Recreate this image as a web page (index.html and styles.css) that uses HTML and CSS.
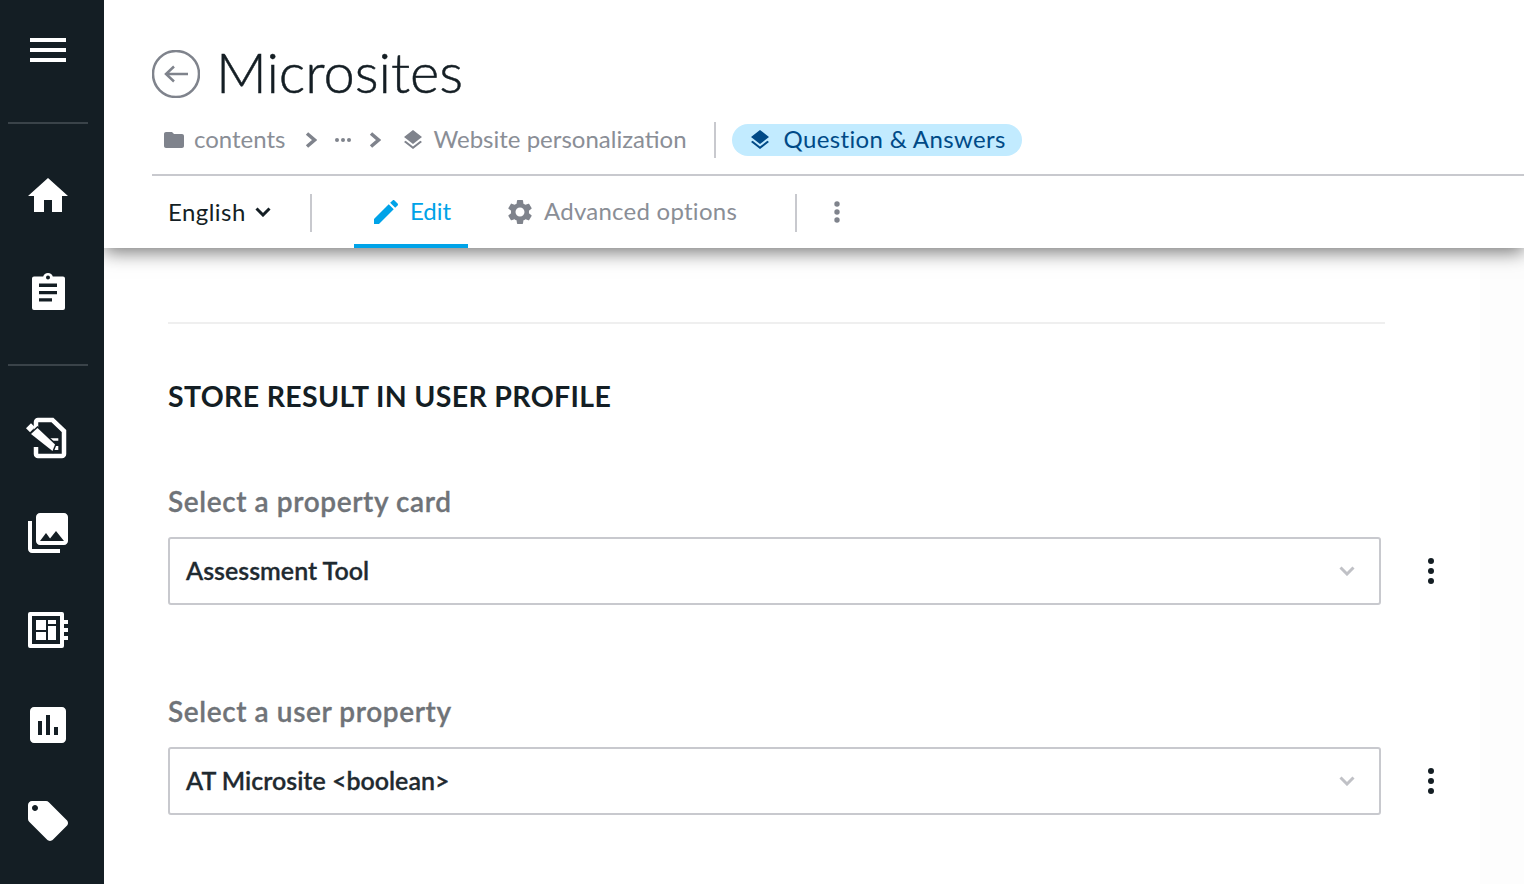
FILE: index.html
```html
<!DOCTYPE html>
<html lang="en">
<head>
    <meta charset="UTF-8">
    <meta name="viewport" content="width=device-width, initial-scale=1.0">
    <title>Microsites</title>
    <link rel="stylesheet" href="styles.css">
</head>
<body>
    <div class="app">
        <!-- Sidebar -->
        <nav class="sidebar">
            <div class="nav-item nav-menu">
                <svg class="nav-icon" viewBox="0 0 24 24"><path d="M3 18h18v-2H3v2zm0-5h18v-2H3v2zm0-7v2h18V6H3z"/></svg>
            </div>
            <div class="nav-divider nav-divider-first"></div>
            <div class="nav-item">
                <svg class="nav-icon" viewBox="0 0 24 24"><path d="M10 20v-6h4v6h5v-8h3L12 3 2 12h3v8z"/></svg>
            </div>
            <div class="nav-item">
                <svg class="nav-icon" viewBox="0 0 48 48"><path fill-rule="evenodd" d="M10 8.500h9.200a5 5 0 0 1 9.600 0H39a2 2 0 0 1 2 2V40a2 2 0 0 1-2 2H10a2 2 0 0 1-2-2V10.500a2 2 0 0 1 2-2zM24 7.500a2 2 0 1 0 0 4 2 2 0 0 0 0-4zM15 15.500V19h18v-3.500zM15 23v3.300h18V23zM15 30.200v3.300h13v-3.300z"/></svg>
            </div>
            <div class="nav-divider"></div>
            <div class="nav-item">
                <svg class="nav-icon" viewBox="0 0 48 48">
                    <path class="doc-line" d="M12 24V9a2 2 0 0 1 2-2h14.500L40 18v23a2 2 0 0 1-2 2H14a2 2 0 0 1-2-2v-7"/>
                    <path d="M26 25.300h8.300v2.500H26zM29.300 33h5v4h-5z"/>
                    <path class="pencil" d="M7 21L13.500 15 31 31.500 28.500 38z"/>
                    <path d="M2 15.300L7 10.300 11 14.300 6 19.300z"/>
                </svg>
            </div>
            <div class="nav-item">
                <svg class="nav-icon" viewBox="0 0 24 24"><path d="M22 16V4c0-1.100-.9-2-2-2H8c-1.100 0-2 .9-2 2v12c0 1.100.9 2 2 2h12c1.100 0 2-.9 2-2zm-11-4l2.030 2.710L16 11l4 5H8l3-4zM2 6v14c0 1.100.9 2 2 2h14v-2H4V6H2z"/></svg>
            </div>
            <div class="nav-item">
                <svg class="nav-icon" viewBox="0 0 48 48"><path fill-rule="evenodd" d="M6 7h32a2 2 0 0 1 2 2v32a2 2 0 0 1-2 2H6a2 2 0 0 1-2-2V9a2 2 0 0 1 2-2zm2 4v28h28V11zM12 15h10v10H12zM12 27h10v8H12zM24 15h8v4h-8zM24 21h8v14h-8zM40 15h4v4h-4zM40 23h4v4h-4zM40 31h4v4h-4z"/></svg>
            </div>
            <div class="nav-item">
                <svg class="nav-icon" viewBox="0 0 24 24"><path d="M19 3H5c-1.100 0-2 .9-2 2v14c0 1.100.9 2 2 2h14c1.100 0 2-.9 2-2V5c0-1.100-.9-2-2-2zM9 17H7v-7h2v7zm4 0h-2V7h2v10zm4 0h-2v-4h2v4z"/></svg>
            </div>
            <div class="nav-item">
                <svg class="nav-icon" viewBox="0 0 24 24"><path d="M21.410 11.580l-9-9C12.050 2.220 11.550 2 11 2H4c-1.100 0-2 .9-2 2v7c0 .55.22 1.050.59 1.420l9 9c.36.36.86.58 1.410.58.55 0 1.050-.22 1.410-.59l7-7c.37-.36.59-.86.59-1.410 0-.55-.23-1.060-.59-1.420zM5.500 7C4.670 7 4 6.330 4 5.500S4.670 4 5.500 4 7 4.670 7 5.500 6.330 7 5.500 7z"/></svg>
            </div>
        </nav>

        <div class="main">
            <!-- Header -->
            <header class="header">
                <div class="title-row">
                    <svg class="back-icon" viewBox="0 0 48 48">
                        <circle cx="24" cy="24" r="23"/>
                        <path d="M36 24H14M22 16.500L14 24l8 7.500"/>
                    </svg>
                    <h1>Microsites</h1>
                </div>

                <div class="crumbs">
                    <svg class="crumb-icon" viewBox="0 0 24 24"><path d="M10 4H4c-1.100 0-1.990.9-1.990 2L2 18c0 1.100.9 2 2 2h16c1.100 0 2-.9 2-2V8c0-1.100-.9-2-2-2h-8l-2-2z"/></svg>
                    <span class="crumb crumb-contents">contents</span>
                    <svg class="crumb-sep" viewBox="0 0 12 16"><path d="M2 1.500L9.500 8 2 14.500"/></svg>
                    <svg class="crumb-dots" viewBox="0 0 16 4"><circle cx="2" cy="2" r="2"/><circle cx="8" cy="2" r="2"/><circle cx="14" cy="2" r="2"/></svg>
                    <svg class="crumb-sep crumb-sep-second" viewBox="0 0 12 16"><path d="M2 1.500L9.500 8 2 14.500"/></svg>
                    <svg class="crumb-icon crumb-layers" viewBox="0 0 24 24"><path d="M11.990 18.540l-7.370-5.730L3 14.070l9 7 9-7-1.630-1.270-7.380 5.740zM12 16l7.360-5.730L21 9l-9-7-9 7 1.630 1.270L12 16z"/></svg>
                    <span class="crumb">Website personalization</span>
                    <div class="crumb-divider"></div>
                    <div class="pill">
                        <svg class="pill-icon" viewBox="0 0 24 24"><path d="M11.990 18.540l-7.370-5.730L3 14.070l9 7 9-7-1.630-1.270-7.380 5.740zM12 16l7.360-5.730L21 9l-9-7-9 7 1.630 1.270L12 16z"/></svg>
                        <span class="pill-text">Question &amp; Answers</span>
                    </div>
                </div>

                <div class="toolbar">
                    <div class="lang">
                        <span class="tool-text lang-text">English</span>
                        <svg class="lang-arrow" viewBox="0 0 16 10"><path d="M1.500 1.500L8 8l6.500-6.500"/></svg>
                    </div>
                    <div class="tool-divider"></div>
                    <div class="tab tab-active">
                        <svg class="tab-pencil" viewBox="0 0 24 24"><path d="M3 17.250V21h3.750L17.810 9.940l-3.750-3.750L3 17.250zM20.710 7.040c.39-.39.39-1.020 0-1.410l-2.340-2.340c-.39-.39-1.020-.39-1.410 0l-1.830 1.830 3.750 3.750 1.830-1.830z"/></svg>
                        <span class="tool-text">Edit</span>
                    </div>
                    <div class="tab tab-options">
                        <svg class="tab-gear" viewBox="0 0 24 24"><path d="M19.140 12.940c.04-.3.06-.61.06-.94 0-.32-.02-.64-.07-.94l2.030-1.580c.18-.14.23-.41.12-.61l-1.920-3.320c-.12-.22-.37-.29-.59-.22l-2.390.96c-.5-.38-1.030-.7-1.620-.94l-.36-2.540c-.04-.24-.24-.41-.48-.41h-3.840c-.24 0-.43.17-.47.41l-.36 2.540c-.59.24-1.130.57-1.620.94l-2.390-.96c-.22-.08-.47 0-.59.22L2.740 8.870c-.12.21-.08.47.12.61l2.030 1.580c-.05.3-.09.63-.09.94s.02.64.07.94l-2.030 1.580c-.18.14-.23.41-.12.61l1.920 3.320c.12.22.37.29.59.22l2.390-.96c.5.38 1.030.7 1.620.94l.36 2.540c.05.24.24.41.48.41h3.840c.24 0 .44-.17.47-.41l.36-2.540c.59-.24 1.130-.56 1.620-.94l2.390.96c.22.08.47 0 .59-.22l1.920-3.320c.12-.22.07-.47-.12-.61l-2.010-1.580zM12 15.600c-1.980 0-3.600-1.620-3.600-3.600s1.620-3.600 3.600-3.600 3.600 1.620 3.600 3.600-1.620 3.600-3.600 3.600z"/></svg>
                        <span class="tool-text options-text">Advanced options</span>
                    </div>
                    <div class="tool-divider"></div>
                    <svg class="tool-kebab" viewBox="0 0 6 22"><circle cx="3" cy="3" r="2.700"/><circle cx="3" cy="11" r="2.700"/><circle cx="3" cy="19" r="2.700"/></svg>
                </div>
            </header>

            <!-- Form -->
            <div class="content">
                <div class="form-col">
                    <div class="rule"></div>
                    <h2>STORE RESULT IN USER PROFILE</h2>

                    <div class="field-label">Select a property card</div>
                    <div class="field-row">
                        <div class="select-box">
                            <span class="select-text">Assessment Tool</span>
                            <svg class="select-arrow" viewBox="0 0 16 10"><path d="M1.500 1.500L8 8l6.500-6.500"/></svg>
                        </div>
                        <svg class="kebab" viewBox="0 0 8 28"><circle cx="4" cy="4" r="3"/><circle cx="4" cy="14" r="3"/><circle cx="4" cy="24" r="3"/></svg>
                    </div>

                    <div class="field-label field-label-second">Select a user property</div>
                    <div class="field-row">
                        <div class="select-box">
                            <span class="select-text">AT Microsite &lt;boolean&gt;</span>
                            <svg class="select-arrow" viewBox="0 0 16 10"><path d="M1.500 1.500L8 8l6.500-6.500"/></svg>
                        </div>
                        <svg class="kebab" viewBox="0 0 8 28"><circle cx="4" cy="4" r="3"/><circle cx="4" cy="14" r="3"/><circle cx="4" cy="24" r="3"/></svg>
                    </div>
                </div>
                <div class="rail"></div>
            </div>
        </div>
    </div>
</body>
</html>
```

FILE: styles.css
```css
/* General */
* {
    box-sizing: border-box;
}

html, body {
    height: 100%;
}

body {
    margin: 0;
    overflow: hidden;
    background-color: #fff;
    color: #141e24;
    font-family: Lato, "Open Sans", sans-serif;
}

.app {
    display: flex;
    height: 884px;
}

/* Sidebar */
.sidebar {
    position: relative;
    z-index: 2;
    flex: 0 0 104px;
    padding: 2px 16px 0 0;
    background-color: #141e24;
}

.nav-item {
    display: flex;
    align-items: center;
    justify-content: center;
    padding-left: 8px;
    height: 96px;
}

.nav-icon {
    width: 48px;
    height: 48px;
    fill: #fff;
}

.nav-divider {
    height: 2px;
    margin: 24px 0 23px 8px;
    background-color: #3a4349;
}

.nav-divider-first {
    margin-bottom: 24px;
}

.doc-line {
    fill: none;
    stroke: #fff;
    stroke-width: 4.500;
}

.pencil {
    stroke: #141e24;
    stroke-width: 3;
    paint-order: stroke;
}

/* Header */
.main {
    flex: 1;
    min-width: 0;
    display: flex;
    flex-direction: column;
}

.header {
    position: relative;
    z-index: 1;
    height: 248px;
    padding: 50px 0 0 48px;
    background-color: #fff;
    box-shadow: 0 4px 18px rgba(0, 0, 0, 0.55);
}

.title-row {
    display: flex;
    align-items: center;
    height: 48px;
}

.back-icon {
    flex: none;
    width: 48px;
    height: 48px;
    fill: none;
    stroke: #7f838c;
    stroke-width: 2.500;
}

h1 {
    margin: 0 0 5px 16px;
    font-size: 56px;
    font-weight: 300;
    line-height: 48px;
    color: #141e24;
    -webkit-text-stroke: 0.5px #141e24;
}

/* Breadcrumb */
.crumbs {
    display: flex;
    align-items: center;
    height: 36px;
    margin-top: 24px;
    padding-left: 10px;
    color: #8a8e96;
    font-size: 24px;
}

.crumb-icon {
    flex: none;
    width: 24px;
    height: 24px;
    fill: #7f838c;
}

.crumb {
    padding-bottom: 3px;
    white-space: nowrap;
}

.crumb-contents {
    margin-left: 8px;
}

.crumb-sep {
    flex: none;
    width: 12px;
    height: 16px;
    margin-left: 19px;
    fill: none;
    stroke: #7f838c;
    stroke-width: 3.500;
}

.crumb-sep-second {
    margin-left: 18px;
}

.crumb-dots {
    flex: none;
    width: 16px;
    height: 4px;
    margin-left: 18px;
    fill: #7f838c;
}

.crumb-layers {
    margin: 0 9px 0 20px;
}

.crumb-divider {
    flex: none;
    width: 2px;
    height: 36px;
    margin: 0 16px 0 27px;
    background-color: #c8c9ce;
}

.pill {
    display: flex;
    align-items: center;
    height: 32px;
    padding: 0 16px;
    border-radius: 16px;
    background-color: #c2ebff;
    color: #004a87;
    white-space: nowrap;
}

.pill-text {
    padding-bottom: 3px;
    letter-spacing: 0.35px;
}

.pill-icon {
    flex: none;
    width: 24px;
    height: 24px;
    margin-right: 12px;
    fill: #004a87;
}

/* Toolbar */
.toolbar {
    display: flex;
    align-items: center;
    height: 74px;
    margin-top: 16px;
    padding-left: 16px;
    border-top: 2px solid #c8c9ce;
    font-size: 24px;
    color: #8a8e96;
}

.tool-text {
    padding-bottom: 3px;
}

.lang {
    display: flex;
    align-items: center;
    width: 142px;
    color: #141e24;
}

.lang-text {
    padding-bottom: 1px;
    letter-spacing: 0.45px;
}

.lang-arrow {
    width: 16px;
    height: 10px;
    margin-left: 9px;
    fill: none;
    stroke: #141e24;
    stroke-width: 3;
}

.tool-divider {
    flex: none;
    width: 2px;
    height: 38px;
    margin-top: 2px;
    background-color: #c8c9ce;
}

.tab {
    display: flex;
    align-items: center;
    height: 72px;
    white-space: nowrap;
}

.tab-active {
    width: 114px;
    margin-left: 42px;
    padding: 4px 0 0 16px;
    border-bottom: 4px solid #00a3e8;
    color: #00a3e8;
}

.tab-pencil {
    width: 32px;
    height: 32px;
    margin-right: 8px;
    fill: #00a3e8;
}

.tab-options {
    width: 327px;
    padding-left: 37px;
}

.options-text {
    letter-spacing: 0.25px;
}

.tab-gear {
    width: 30px;
    height: 30px;
    margin-right: 9px;
    fill: #7f838c;
}

.tool-kebab {
    width: 6px;
    height: 22px;
    margin-left: 37px;
    fill: #7f838c;
}

/* Form */
.content {
    flex: 1;
    display: flex;
    min-height: 0;
}

.form-col {
    flex: 1;
    padding: 74px 0 0 64px;
}

.rail {
    flex: 0 0 44px;
    background-color: #fdfdfd;
}

.rule {
    width: 1217px;
    height: 2px;
    background-color: #efefef;
}

h2 {
    margin: 42px 0 0;
    font-size: 28.500px;
    font-weight: 700;
    letter-spacing: 0.33px;
    line-height: 60px;
    color: #141e24;
}

.field-label {
    margin-top: 55px;
    font-family: "Lato Semibold", Lato, sans-serif;
    font-size: 28px;
    font-weight: 600;
    letter-spacing: 0.6px;
    line-height: 40px;
    color: #6f7378;
    -webkit-text-stroke: 0.3px #6f7378;
}

.field-label-second {
    margin-top: 86px;
}

.field-row {
    display: flex;
    align-items: center;
    margin-top: 16px;
}

.select-box {
    display: flex;
    align-items: center;
    justify-content: space-between;
    width: 1213px;
    height: 68px;
    padding: 0 24px 0 16px;
    border: 2px solid #c8c9ce;
    border-radius: 3px;
    font-family: "Lato Semibold", Lato, sans-serif;
    font-size: 25px;
    font-weight: 600;
    color: #1f2a30;
}

.select-text {
    padding-bottom: 2px;
    -webkit-text-stroke: 0.3px #1f2a30;
}

.select-arrow {
    width: 16px;
    height: 10px;
    fill: none;
    stroke: #c0c1c6;
    stroke-width: 3;
}

.kebab {
    width: 8px;
    height: 28px;
    margin-left: 46px;
    fill: #141e24;
}
```
